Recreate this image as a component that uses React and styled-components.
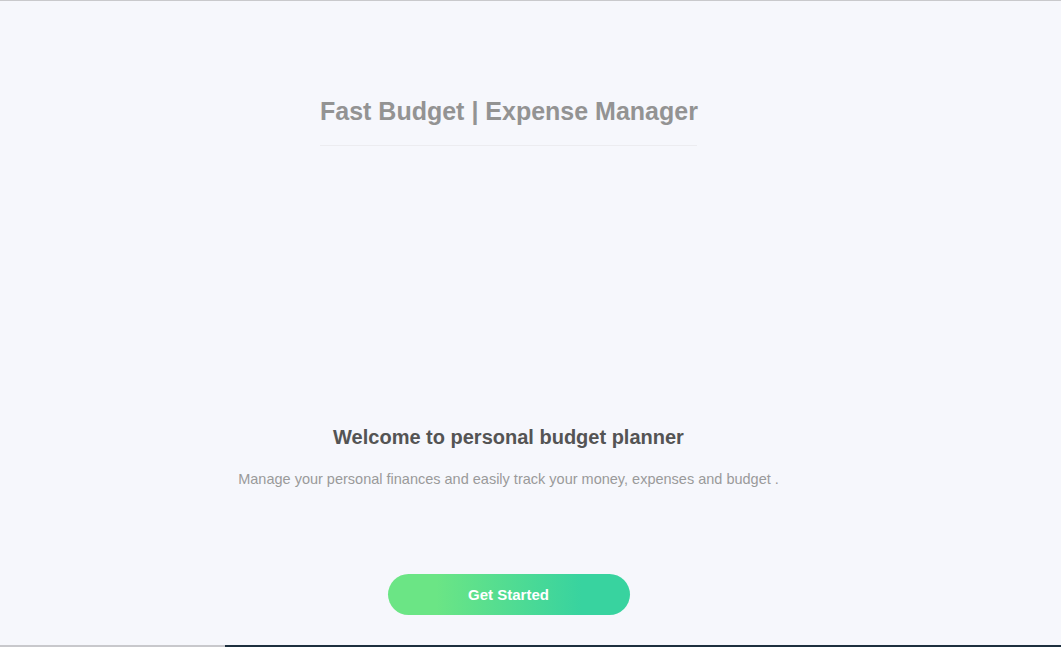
import React from 'react';
import styled, { createGlobalStyle } from 'styled-components';

const GlobalStyle = createGlobalStyle`
  html, body {
    margin: 0;
    padding: 0;
    background-color: #f6f7fc;
    font-family: "Liberation Sans", Arial, sans-serif;
  }
`;

const Page = styled.div`
  height: 647px;
  box-sizing: border-box;
  border-top: 1px solid #c9c9cc;
  display: flex;
  flex-direction: column;
  overflow: hidden;
`;

const Main = styled.main`
  flex: 1;
  display: flex;
  flex-direction: column;
  align-items: center;
  padding-right: 44px;
`;

const Header = styled.header`
  margin-top: 96px;
  width: 377px;
  padding-bottom: 20px;
  border-bottom: 1px solid #ececf0;
  text-align: center;
`;

const Title = styled.h1`
  margin: 0;
  font-size: 25px;
  line-height: 28px;
  font-weight: bold;
  color: #939393;
  white-space: nowrap;
`;

const Hero = styled.section`
  margin-top: 279px;
  display: flex;
  flex-direction: column;
  align-items: center;
`;

const Heading = styled.h2`
  margin: 0;
  font-size: 20px;
  line-height: 24px;
  font-weight: bold;
  color: #545454;
`;

const Lead = styled.p`
  margin: 22px 0 0;
  font-size: 14.5px;
  line-height: 16px;
  color: #9a9a9a;
  white-space: nowrap;
`;

const StartButton = styled.button`
  margin-top: 87px;
  width: 242px;
  height: 41px;
  border: none;
  border-radius: 21px;
  background: linear-gradient(to right, #6be585 20%, #38d39f 80%);
  color: #ffffff;
  font-family: "Liberation Sans", Arial, sans-serif;
  font-size: 15px;
  font-weight: bold;
  cursor: pointer;
`;

const BottomBar = styled.div`
  display: flex;
  height: 2px;
`;

const BarSegment = styled.div`
  background-color: ${(p) => (p.$dark ? '#1d2f3e' : '#c8c8cc')};
  ${(p) => (p.$dark ? 'flex: 1;' : 'width: 225px;')}
`;

function App() {
  return (
    <>
      <GlobalStyle />
      <Page>
        <Main>
          <Header>
            <Title>Fast Budget | Expense Manager</Title>
          </Header>
          <Hero>
            <Heading>Welcome to personal budget planner</Heading>
            <Lead>Manage your personal finances and easily track your money, expenses and budget .</Lead>
            <StartButton type="button">Get Started</StartButton>
          </Hero>
        </Main>
        <BottomBar>
          <BarSegment />
          <BarSegment $dark />
        </BottomBar>
      </Page>
    </>
  );
}

export default App;
